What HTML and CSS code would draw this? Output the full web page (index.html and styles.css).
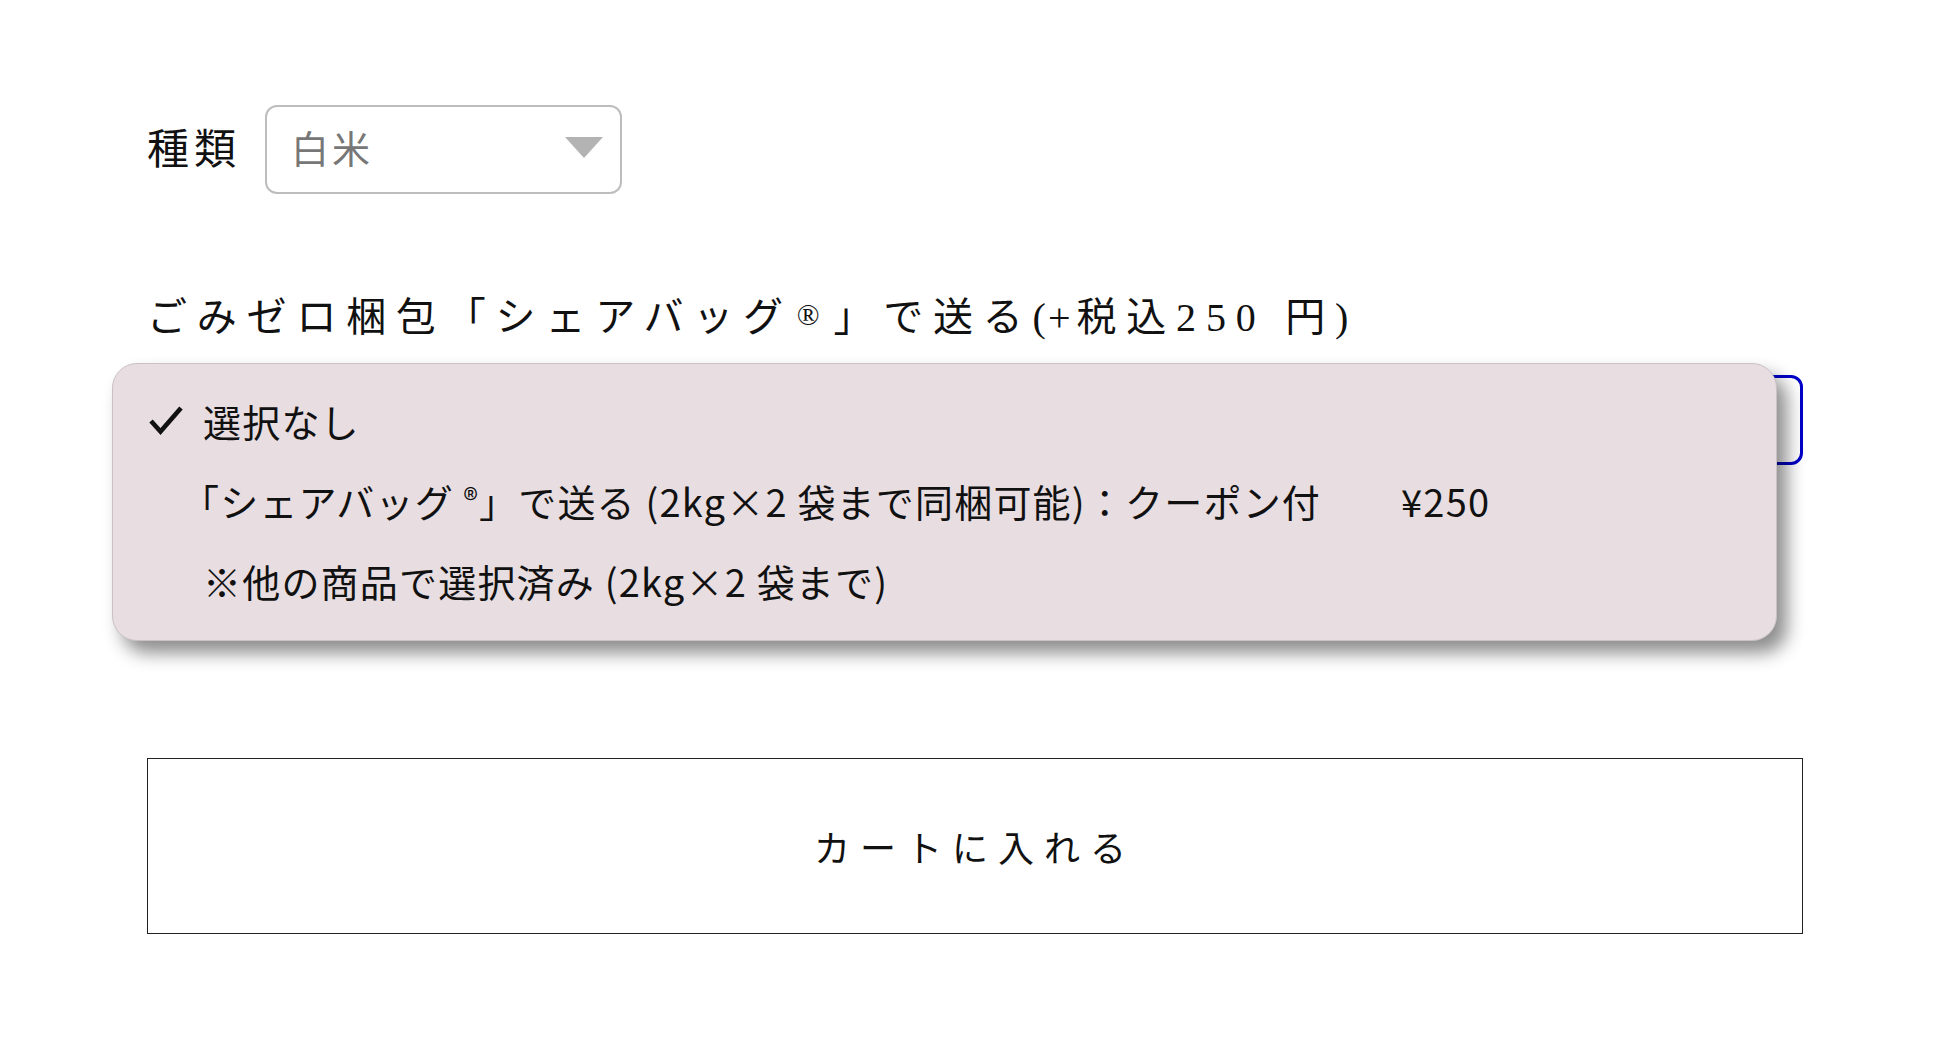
FILE: index.html
```html
<!DOCTYPE html>
<html lang="ja">
<head>
    <meta charset="UTF-8">
    <meta name="viewport" content="width=device-width, initial-scale=1.0">
    <title>ごみゼロ梱包</title>
    <link rel="stylesheet" href="styles.css">
</head>
<body>
    <div class="product-form">
        <div class="field-row">
            <span class="field-label">種類</span>
            <div class="select-box">
                <span class="select-value">白米</span>
                <span class="select-arrow"></span>
            </div>
        </div>

        <div class="option-title">ごみゼロ梱包「シェアバッグ<span class="reg">®</span>」で送る<span class="tight">(+</span>税込250 円)</div>

        <div class="bag-select">
            <div class="bag-field"></div>
            <ul class="bag-menu">
                <li class="bag-item">
                    <span class="check">
                        <svg width="36" height="30" viewBox="0 0 36 30"><path d="M3 16 L12.5 26.5 L33 3" fill="none" stroke="#111" stroke-width="4.6" stroke-linejoin="miter"/></svg>
                    </span>
                    <span>選択なし</span>
                </li>
                <li class="bag-item">
                    <span class="check"></span>
                    <span class="bracket-start">「シェアバッグ <span class="reg">®</span>」で送る (2kg×2 袋まで同梱可能)：クーポン付</span>
                    <span class="price">¥250</span>
                </li>
                <li class="bag-item">
                    <span class="check"></span>
                    <span>※他の商品で選択済み (2kg×2 袋まで)</span>
                </li>
            </ul>
        </div>

        <button class="cart-button">カートに入れる</button>
    </div>
</body>
</html>
```

FILE: styles.css
```css
body {
    margin: 0;
    background: #fff;
    color: #111;
    font-family: "Liberation Serif", "Noto Sans CJK JP", serif;
}

.product-form {
    width: 1656px;
    margin: 0 auto;
    padding-top: 105px;
}

.field-row {
    display: flex;
    align-items: center;
    gap: 24px;
}

.field-label {
    font-size: 42px;
    letter-spacing: 5px;
    line-height: 1;
}

.select-box {
    width: 357px;
    height: 89px;
    box-sizing: border-box;
    border: 2px solid #bdbdbd;
    border-radius: 12px;
    display: flex;
    align-items: center;
    justify-content: space-between;
    padding: 0 17px 0 24px;
}

.select-value {
    font-size: 38px;
    letter-spacing: 3px;
    color: #777;
    line-height: 1;
}

.select-arrow {
    width: 0;
    height: 0;
    border-left: 19px solid transparent;
    border-right: 19px solid transparent;
    border-top: 21px solid #b3b3b3;
    margin-top: -4px;
}

.option-title {
    margin-top: 94px;
    height: 60px;
    font-size: 40px;
    letter-spacing: 9.8px;
    line-height: 60px;
}

.option-title .tight {
    letter-spacing: 2px;
    margin-right: 4px;
}

.reg {
    line-height: 0;
    vertical-align: 6px;
}

.option-title .reg {
    font-size: 30px;
    margin: 0 4px;
}

.bag-select {
    position: relative;
    margin-top: 27px;
}

.bag-field {
    height: 90px;
    box-sizing: border-box;
    border: 3px solid #0000c8;
    border-radius: 12px;
}

.bag-menu {
    position: absolute;
    left: -35px;
    top: -12px;
    width: 1665px;
    box-sizing: border-box;
    margin: 0;
    padding: 16px 0 20px;
    list-style: none;
    background: #e8dee1;
    border: 1px solid #c9c1c4;
    border-radius: 25px;
    box-shadow: 10px 12px 18px rgba(0, 0, 0, 0.45);
    font-family: "Noto Sans CJK JP", sans-serif;
    font-size: 38px;
    letter-spacing: 1.2px;
    color: #111;
}

.bag-item {
    height: 80px;
    display: flex;
    align-items: center;
    padding-left: 35px;
}

.check {
    width: 55px;
    flex-shrink: 0;
    display: flex;
    align-items: center;
}

.bracket-start {
    margin-left: -22px;
}

.bag-menu .reg {
    font-size: 30px;
}

.price {
    margin-left: 80px;
}

.cart-button {
    display: block;
    width: 100%;
    height: 176px;
    margin-top: 293px;
    background: #fff;
    border: 1.5px solid #222;
    border-radius: 0;
    font-family: "Liberation Serif", "Noto Sans CJK JP", serif;
    font-size: 36px;
    letter-spacing: 10px;
    color: #111;
}
```
